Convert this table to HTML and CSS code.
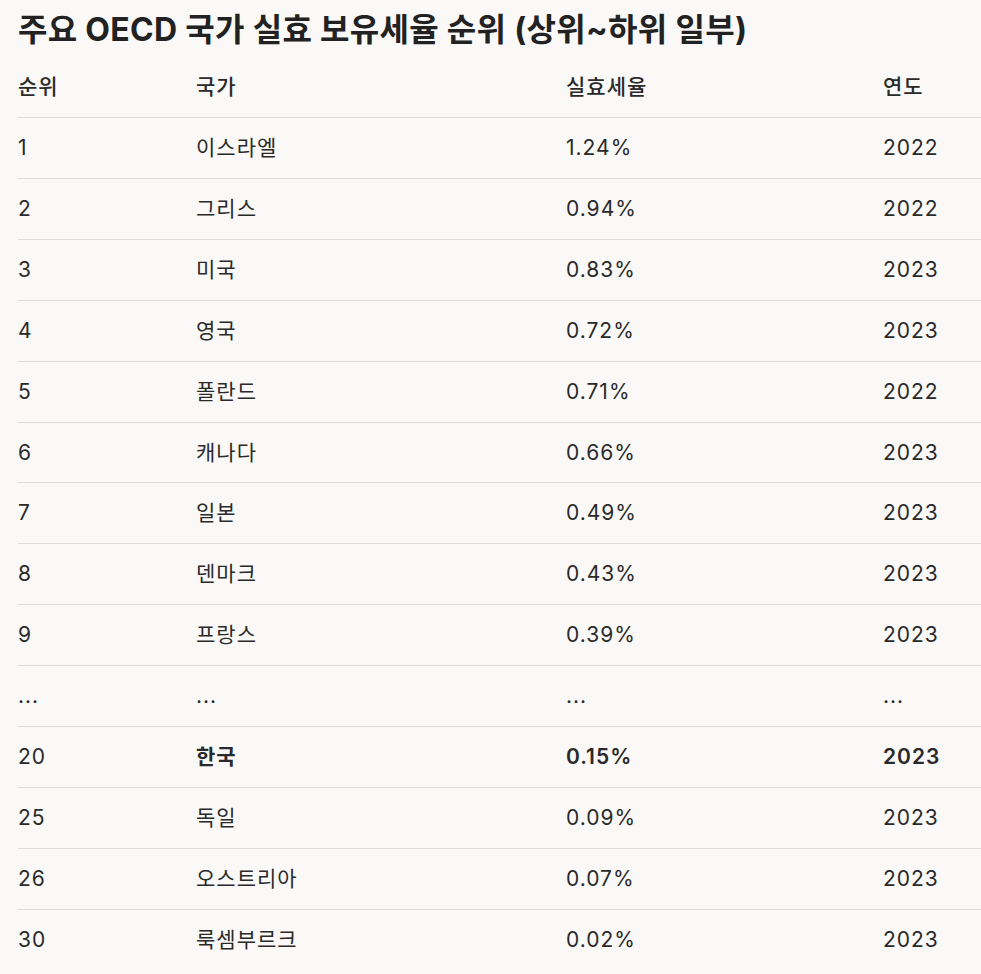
FILE: index.html
```html
<!DOCTYPE html>
<html lang="ko">
<head>
<meta charset="utf-8">
<link rel="stylesheet" href="styles.css">
</head>
<body>
<main class="page">
  <h1 class="title">주요 OECD 국가 실효 보유세율 순위 (상위~하위 일부)</h1>
  <table class="rank">
    <thead>
      <tr><th class="c1">순위</th><th class="c2">국가</th><th class="c3">실효세율</th><th class="c4">연도</th></tr>
    </thead>
    <tbody>
      <tr><td>1</td><td>이스라엘</td><td>1.24%</td><td>2022</td></tr>
      <tr><td>2</td><td>그리스</td><td>0.94%</td><td>2022</td></tr>
      <tr><td>3</td><td>미국</td><td>0.83%</td><td>2023</td></tr>
      <tr><td>4</td><td>영국</td><td>0.72%</td><td>2023</td></tr>
      <tr><td>5</td><td>폴란드</td><td>0.71%</td><td>2022</td></tr>
      <tr><td>6</td><td>캐나다</td><td>0.66%</td><td>2023</td></tr>
      <tr><td>7</td><td>일본</td><td>0.49%</td><td>2023</td></tr>
      <tr><td>8</td><td>덴마크</td><td>0.43%</td><td>2023</td></tr>
      <tr><td>9</td><td>프랑스</td><td>0.39%</td><td>2023</td></tr>
      <tr><td>...</td><td>...</td><td>...</td><td>...</td></tr>
      <tr><td>20</td><td><strong>한국</strong></td><td><strong>0.15%</strong></td><td><strong>2023</strong></td></tr>
      <tr><td>25</td><td>독일</td><td>0.09%</td><td>2023</td></tr>
      <tr><td>26</td><td>오스트리아</td><td>0.07%</td><td>2023</td></tr>
      <tr><td>30</td><td>룩셈부르크</td><td>0.02%</td><td>2023</td></tr>
    </tbody>
  </table>
</main>
</body>
</html>
```
FILE: styles.css
```css
html, body {
  margin: 0;
  padding: 0;
  background: #faf9f7;
}
body {
  font-family: "Inter", "Noto Sans CJK KR", sans-serif;
  color: #2a2a2a;
}
.page {
  padding: 10px 0 0 18px;
}
.title {
  margin: 0 0 7px 0;
  font-size: 32px;
  line-height: 40px;
  font-weight: 700;
  letter-spacing: 0.3px;
  color: #222;
}
.rank {
  width: 963px;
  border-collapse: collapse;
  font-size: 21px;
  letter-spacing: 1px;
}
.rank th, .rank td {
  padding: 15px 0;
  line-height: 29.92px;
  text-align: left;
  border-bottom: 1px solid #e0ddd8;
}
.rank th {
  font-weight: 500;
}
.rank tbody tr:last-child td {
  border-bottom: none;
}
.rank strong {
  font-weight: 600;
}
.c1 { width: 178px; }
.c2 { width: 370px; }
.c3 { width: 317px; }
.c4 { width: 98px; }
```
